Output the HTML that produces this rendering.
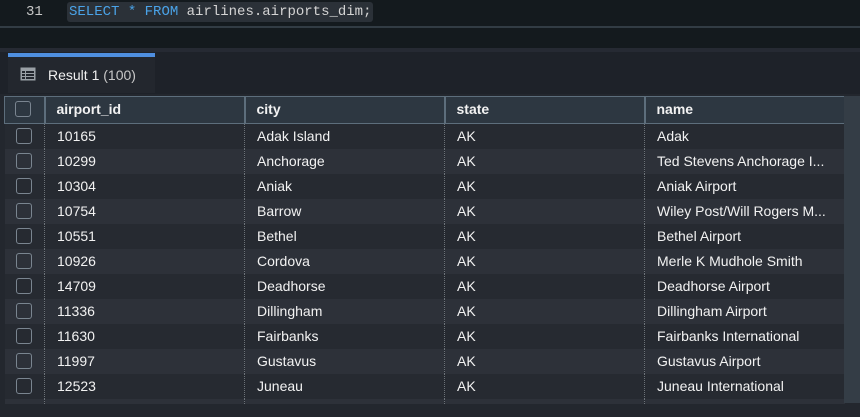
<!DOCTYPE html><html><head><style>
*{margin:0;padding:0;box-sizing:border-box}
body{width:860px;height:417px;background:#23272e;font-family:"Liberation Sans",sans-serif;overflow:hidden;position:relative}
.top{position:absolute;left:0;top:0;width:860px;height:48px;background:#141a1e;overflow:hidden}
.sep{position:absolute;left:0;top:26px;width:860px;height:2px;background:#323c44}
.code{position:absolute;left:67px;top:2px;height:20px;padding:0 2px;background:#2b3138;border-radius:3px;font-family:"Liberation Mono",monospace;font-size:14px;line-height:20px;color:#d4d4d4}
.ln{position:absolute;left:26px;top:2px;font-family:"Liberation Mono",monospace;font-size:14px;line-height:20px;color:#c8c8c8}
.kw{color:#4aa3e8}
.tabbar{position:absolute;left:0;top:48px;width:860px;height:46px;background:#1e2229;border-top:4px solid #262a33}
.tab{position:absolute;left:8px;top:53px;width:147px;height:40px;background:#23272e;border-top:4px solid #4f8fe0}
.tab span{position:absolute;left:40px;top:10px;font-size:14px;color:#f0f0f0}
.tab span i{font-style:normal;color:#c8c8c8}
table{position:absolute;left:4px;top:96px;border-collapse:collapse;table-layout:fixed}
td,th{height:25px;font-size:14px;color:#f2f2f2;text-align:left;padding-left:12px;white-space:nowrap;overflow:hidden}
th{height:27px;background:#2d3741;font-weight:bold;border-top:1px solid #5d6e7c;border-bottom:1px solid #5d6e7c;border-left:2px solid #5d6e7c;padding-left:11px;padding-bottom:3px}
tr.o td{background:#2d3139}
tr.e td{background:#262a31}
td+td{border-left:1px dotted #6c7278}
.cb{width:16px;height:16px;border:1.5px solid #7a8590;border-radius:3px;margin-left:-1px}
.sb{position:absolute;left:844px;top:96px;width:16px;height:307px;background:#343d46}
</style></head><body>
<div class="top"><div class="ln">31</div><div class="code"><span class="kw">SELECT</span> <span class="kw">*</span> <span class="kw">FROM</span> airlines.airports_dim;</div><div class="sep"></div></div>
<div class="tabbar"></div>
<div class="tab"><svg style="position:absolute;left:12px;top:10px" width="16" height="14"><rect x="0.5" y="0.5" width="15" height="13" fill="#9aa0a6"/><g fill="#23272e"><rect x="2" y="4" width="3" height="2"/><rect x="6" y="4" width="8" height="2"/><rect x="2" y="7" width="3" height="2"/><rect x="6" y="7" width="8" height="2"/><rect x="2" y="10" width="3" height="2"/><rect x="6" y="10" width="8" height="2"/></g></svg><span>Result 1 <i>(100)</i></span></div>
<table>
<colgroup><col style="width:40px"><col style="width:200px"><col style="width:200px"><col style="width:200px"><col style="width:200px"></colgroup>
<tr><th style="border-left:1px solid #5d6e7c"><div class="cb"></div></th><th>airport_id</th><th>city</th><th>state</th><th style="border-right:1px solid #5d6e7c">name</th></tr>
<tr class="e"><td><div class="cb"></div></td><td>10165</td><td>Adak Island</td><td>AK</td><td>Adak</td></tr>
<tr class="o"><td><div class="cb"></div></td><td>10299</td><td>Anchorage</td><td>AK</td><td>Ted Stevens Anchorage I...</td></tr>
<tr class="e"><td><div class="cb"></div></td><td>10304</td><td>Aniak</td><td>AK</td><td>Aniak Airport</td></tr>
<tr class="o"><td><div class="cb"></div></td><td>10754</td><td>Barrow</td><td>AK</td><td>Wiley Post/Will Rogers M...</td></tr>
<tr class="e"><td><div class="cb"></div></td><td>10551</td><td>Bethel</td><td>AK</td><td>Bethel Airport</td></tr>
<tr class="o"><td><div class="cb"></div></td><td>10926</td><td>Cordova</td><td>AK</td><td>Merle K Mudhole Smith</td></tr>
<tr class="e"><td><div class="cb"></div></td><td>14709</td><td>Deadhorse</td><td>AK</td><td>Deadhorse Airport</td></tr>
<tr class="o"><td><div class="cb"></div></td><td>11336</td><td>Dillingham</td><td>AK</td><td>Dillingham Airport</td></tr>
<tr class="e"><td><div class="cb"></div></td><td>11630</td><td>Fairbanks</td><td>AK</td><td>Fairbanks International</td></tr>
<tr class="o"><td><div class="cb"></div></td><td>11997</td><td>Gustavus</td><td>AK</td><td>Gustavus Airport</td></tr>
<tr class="e"><td><div class="cb"></div></td><td>12523</td><td>Juneau</td><td>AK</td><td>Juneau International</td></tr>
<tr class="o"><td style="height:5px"></td><td style="height:5px"></td><td style="height:5px"></td><td style="height:5px"></td><td style="height:5px"></td></tr>
</table>
<div class="sb"></div>
</body></html>
